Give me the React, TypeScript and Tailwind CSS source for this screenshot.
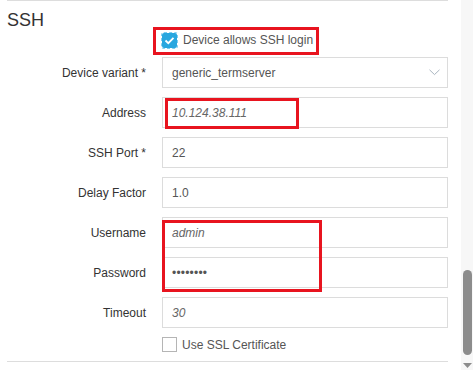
import React from 'react';

const font = { fontFamily: '"Liberation Sans", Arial, sans-serif' };

interface FieldRowProps {
  label: string;
  children: React.ReactNode;
  first?: boolean;
}

const FieldRow = ({ label, children, first }: FieldRowProps) => (
  <div className={`flex items-center ${first ? 'mt-[7px]' : 'mt-[9px]'}`}>
    <div className="w-[139px] pr-0 text-right text-[12px] text-[#333]">{label}</div>
    <div className="ml-[16px] h-[31px] w-[286px] border border-[#dcdcdc] bg-white flex items-center px-[9px] text-[12px] text-[#555]">
      {children}
    </div>
  </div>
);

export default function App() {
  return (
    <div className="flex w-[473px] h-[370px] bg-white overflow-hidden" style={font}>
      {/* Form panel */}
      <div className="relative w-[461px] h-full">
        <div className="ml-[7px] w-[441px] border-t border-[#dddddd]">
          <h2 className="mt-[9px] h-[20px] text-[18px] leading-[20px] text-[#333] font-normal">SSH</h2>

          <div className="flex items-center h-[20px] pl-[155px]">
            <span className="flex items-center justify-center w-[15px] h-[15px] rounded-[2px] bg-[#29a7df] outline outline-1 outline-dashed outline-[#7fcdef]">
              <svg width="11" height="9" viewBox="0 0 11 9">
                <path d="M1.5 4.5 L4.3 7.2 L9.5 1.8" fill="none" stroke="#ffffff" strokeWidth="1.8" />
              </svg>
            </span>
            <span className="ml-[6px] text-[12px] text-[#555]">Device allows SSH login</span>
          </div>

          <FieldRow label="Device variant *" first>
            <span className="flex-1">generic_termserver</span>
            <svg width="11" height="7" viewBox="0 0 11 7" className="mr-[-2px]">
              <path d="M0.5 0.8 L5.5 5.6 L10.5 0.8" fill="none" stroke="#a9b4bf" strokeWidth="1" />
            </svg>
          </FieldRow>
          <FieldRow label="Address">
            <span className="italic text-[#666]">10.124.38.111</span>
          </FieldRow>
          <FieldRow label="SSH Port *">
            <span>22</span>
          </FieldRow>
          <FieldRow label="Delay Factor">
            <span>1.0</span>
          </FieldRow>
          <FieldRow label="Username">
            <span className="italic text-[#666]">admin</span>
          </FieldRow>
          <FieldRow label="Password">
            <span className="text-[12px] text-[#555] tracking-[0.2px]">••••••••</span>
          </FieldRow>
          <FieldRow label="Timeout">
            <span className="italic text-[#666]">30</span>
          </FieldRow>

          <div className="flex items-center h-[17px] mt-[8px] pl-[155px]">
            <span className="w-[15px] h-[15px] border border-[#b5b5b5] bg-white" />
            <span className="ml-[5px] text-[12px] text-[#555]">Use SSL Certificate</span>
          </div>

          <div className="mt-[8px] border-t border-[#dddddd]" />
        </div>

        {/* Annotation boxes */}
        <div className="absolute left-[153px] top-[27px] w-[166px] h-[28px] border-[3px] border-[#e8141f]" />
        <div className="absolute left-[165px] top-[98px] w-[134px] h-[31px] border-[3px] border-[#e8141f]" />
        <div className="absolute left-[162px] top-[220px] w-[160px] h-[72px] border-[3px] border-[#e8141f]" />
      </div>

      {/* Scrollbar */}
      <div className="w-[12px] h-full bg-[#f7f7f7] flex flex-col items-center pt-[270px]">
        <div className="w-[9px] h-[85px] rounded-full bg-[#8c8c8c] ml-[1px]" />
        <svg width="9" height="6" viewBox="0 0 9 6" className="mt-[8px] ml-[1px]">
          <path d="M0 0 L9 0 L4.5 5 Z" fill="#8c8c8c" />
        </svg>
      </div>
    </div>
  );
}
